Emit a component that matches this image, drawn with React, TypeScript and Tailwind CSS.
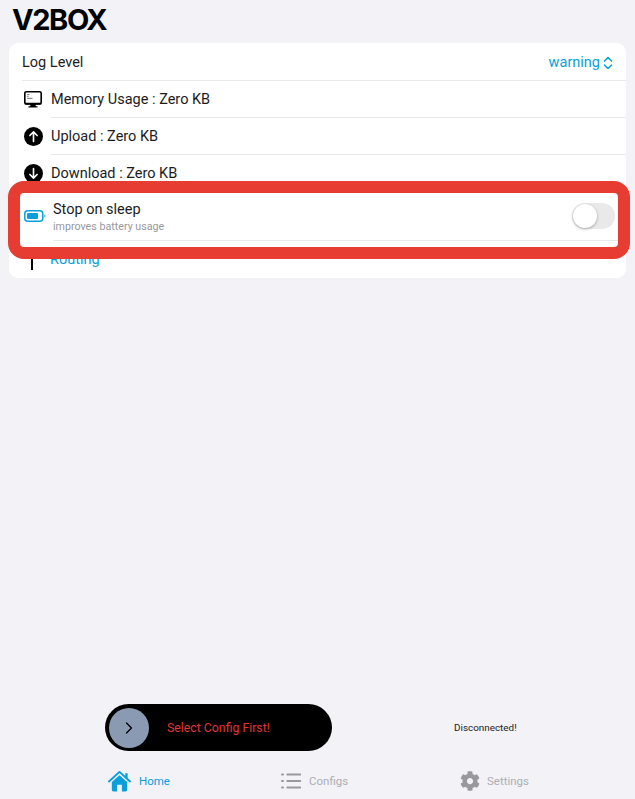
import { ChevronRight } from 'lucide-react'
import { FaCog } from 'react-icons/fa'

const ArrowCircle = ({ down }: { down?: boolean }) => (
	<svg viewBox="0 0 20 20" className="h-[19px] w-[19px]">
		<circle cx="10" cy="10" r="10" fill="#000" />
		<path
			d={down ? 'M10 4.8v10M6.2 11l3.800 3.800 3.800-3.800' : 'M10 15.200v-10M6.200 9l3.800-3.800L13.800 9'}
			stroke="#fff"
			strokeWidth="1.7"
			fill="none"
			strokeLinecap="round"
			strokeLinejoin="round"
		/>
	</svg>
)

const MonitorIcon = () => (
	<svg viewBox="0 0 20 19" className="h-[19px] w-[18px]">
		<rect x="0.9" y="0.9" width="18.2" height="13.4" rx="1.6" fill="#fff" stroke="#000" strokeWidth="1.8" />
		<path d="M3.500 4h2.500M3.500 6h1.500M3.500 8.200h6" stroke="#555" strokeWidth="0.9" />
		<path d="M1 13h18v2H1zM7 15h6v2H7zM5 17h10v1.500H5z" fill="#000" />
	</svg>
)

const BatteryIcon = () => (
	<svg viewBox="0 0 22 12" className="h-[12px] w-[22px]">
		<rect x="0.8" y="0.8" width="18" height="10.400" rx="3" fill="none" stroke="#0a9fd8" strokeWidth="1.500" />
		<rect x="3" y="3" width="11" height="6" rx="1.200" fill="#0a9fd8" />
		<path d="M20.300 4.500l1.500 1.500-1.500 1.500z" fill="#0a9fd8" />
	</svg>
)

const HomeIcon = () => (
	<svg viewBox="0 0 24 22" className="h-[22px] w-[23px]">
		<path d="M1 11.500 12 1.500l11 10" fill="none" stroke="#0a9fd8" strokeWidth="2" strokeLinecap="round" strokeLinejoin="round" />
		<path d="M18 3h2.500v5.500L18 6.500z" fill="#0a9fd8" />
		<path
			fillRule="evenodd"
			d="M12 5 4 12v8.500A1.500 1.500 0 0 0 5.500 22h13a1.500 1.500 0 0 0 1.500-1.500V12zM9.500 15h5v7h-5z"
			fill="#0a9fd8"
		/>
	</svg>
)

const ListIcon = () => (
	<svg viewBox="0 0 20 16" className="h-[16px] w-[20px]" fill="#98989d">
		<rect x="0" y="0.500" width="3" height="2" rx="1" />
		<rect x="0" y="7" width="3" height="2" rx="1" />
		<rect x="0" y="13.500" width="3" height="2" rx="1" />
		<rect x="5.500" y="0.500" width="14.500" height="2" rx="0.500" />
		<rect x="5.500" y="7" width="14.500" height="2" rx="0.500" />
		<rect x="5.500" y="13.500" width="14.500" height="2" rx="0.500" />
	</svg>
)

const UpDownIcon = () => (
	<svg viewBox="0 0 10 14" className="h-[14px] w-[10px]" fill="none" stroke="#0a9fd8" strokeWidth="1.500" strokeLinecap="round" strokeLinejoin="round">
		<path d="M1.500 5 5 1.500 8.500 5M1.500 9 5 12.500 8.500 9" />
	</svg>
)

const Divider = ({ className }: { className: string }) => (
	<div className={`h-px bg-[#e8e8ec] ${className}`} />
)

const StatRow = ({ icon, label }: { icon: React.ReactNode; label: string }) => (
	<>
		<div className="flex h-[36px] items-center">
			<div className="flex w-[42px] justify-center pl-[6px]">{icon}</div>
			<span className="pt-[1px] text-[14.500px] text-[#1c1c1e]">{label}</span>
		</div>
		<Divider className="ml-[42px]" />
	</>
)

export default function App() {
	return (
		<div className="relative flex h-[799px] w-[635px] flex-col overflow-hidden bg-[#f2f2f7] font-['Roboto',sans-serif]">
			<h1 className="pl-3 pt-[2px] font-['Inter',sans-serif] text-[29px] leading-[36px] font-bold tracking-[-1.400px] text-black">V2BOX</h1>

			<div className="mx-[9px] mt-[5px] rounded-[9px] bg-white">
				<div className="flex h-[37px] items-center justify-between pl-[13px] pr-[13px]">
					<span className="pt-[2px] text-[14.500px] text-[#1c1c1e]">Log Level</span>
					<span className="flex items-center gap-[3px] pt-[2px] text-[14.500px] text-[#0a9fd8]">
						warning
						<UpDownIcon />
					</span>
				</div>
				<Divider className="ml-[13px]" />
				<StatRow icon={<MonitorIcon />} label="Memory Usage : Zero KB" />
				<StatRow icon={<ArrowCircle />} label="Upload : Zero KB" />
				<StatRow icon={<ArrowCircle down />} label="Download : Zero KB" />

				<div className="flex h-[48px] items-center pr-[11px]">
					<div className="flex w-[44px] justify-center pl-[7px]">
						<BatteryIcon />
					</div>
					<div className="flex-1 pt-[1px]">
						<div className="text-[14.500px] leading-[20px] text-[#1c1c1e]">Stop on sleep</div>
						<div className="text-[10.700px] leading-[13px] text-[#98989d]">improves battery usage</div>
					</div>
					<div className="h-[26px] w-[43px] rounded-full bg-[#e9e9ea] p-[1px]">
						<div className="h-[24px] w-[24px] rounded-full bg-white shadow-[0_1px_3px_rgba(0,0,0,0.3)]" />
					</div>
				</div>
				<Divider className="ml-[44px]" />
				<div className="flex h-[37px] items-center">
					<div className="flex w-[41px] justify-center pl-[4px]">
						<div className="mt-[6px] h-[14px] w-[2px] bg-black" />
					</div>
					<span className="text-[14.500px] text-[#0a9fd8]">Routing</span>
				</div>
			</div>

			<div className="mt-auto flex items-center pl-[105px]">
				<div className="flex h-[47px] w-[227px] items-center rounded-full bg-black pl-[4px]">
					<div className="flex h-[40px] w-[40px] items-center justify-center rounded-full bg-[#8a9ab3]">
						<ChevronRight className="h-[20px] w-[20px] text-black" strokeWidth={1.500} />
					</div>
					<span className="ml-[18px] pt-[1px] text-[12.300px] text-[#e0353a]">Select Config First!</span>
				</div>
				<span className="ml-[122px] pt-[1px] text-[9.900px] text-[#1c1c1e]">Disconnected!</span>
			</div>

			<div className="flex h-[48px] items-center pt-[12px] pl-[108px]">
				<div className="flex w-[173px] items-center gap-[8px]">
					<HomeIcon />
					<span className="pt-[2px] text-[11.500px] text-[#0a9fd8]">Home</span>
				</div>
				<div className="flex w-[179px] items-center gap-[8px]">
					<ListIcon />
					<span className="pt-[2px] text-[11.500px] text-[#aeaeb2]">Configs</span>
				</div>
				<div className="flex items-center gap-[7px]">
					<FaCog className="h-[20px] w-[20px] text-[#98989d]" />
					<span className="pt-[2px] text-[11.500px] text-[#aeaeb2]">Settings</span>
				</div>
			</div>

			<div className="absolute left-[8px] top-[181px] h-[78px] w-[622px] rounded-[16px] border-[12px] border-[#e63c32]" />
		</div>
	)
}
